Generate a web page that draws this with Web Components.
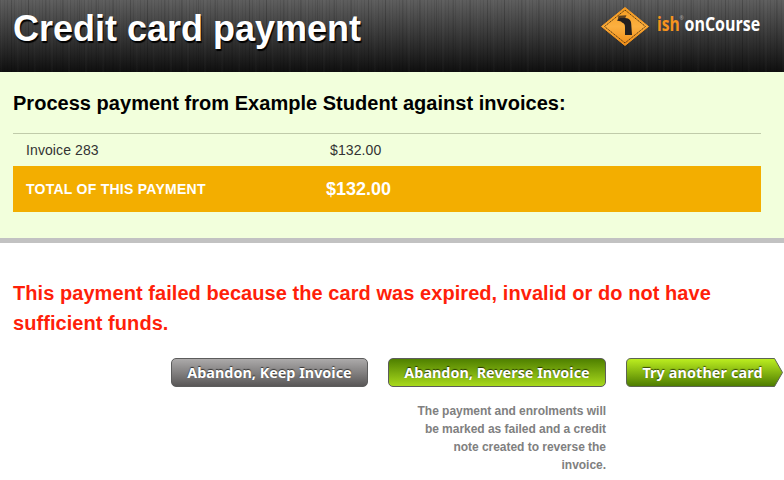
<!DOCTYPE html>
<html lang="en">
<head>
<meta charset="utf-8">
<title>Credit card payment</title>
<style>
body { margin: 0; background: #fff; font-family: "Liberation Sans", Arial, sans-serif; overflow: hidden; }
</style>
</head>
<body>
<payment-page></payment-page>
<script>
function define(name, html) {
  const template = document.createElement('template');
  template.innerHTML = html;
  customElements.define(name, class extends HTMLElement {
    constructor() {
      super();
      this.attachShadow({ mode: 'open' }).append(template.content.cloneNode(true));
    }
  });
}

define('course-logo', `
<style>:host{display:block;width:164px;height:42px} svg{display:block;overflow:visible}</style>
<svg width="164" height="42" viewBox="600 5 164 42">
  <defs><linearGradient id="g" x1="0" y1="0" x2="0" y2="1"><stop offset="0" stop-color="#f79c20"/><stop offset=".5" stop-color="#fcb040"/><stop offset="1" stop-color="#f28c16"/></linearGradient></defs>
  <path d="M625 9 L648 27.5 L625 46 L602 27.5Z" fill="#111" opacity=".5"/>
  <path d="M625 7.5 L648.5 26.5 L625 45.5 L601.5 26.5Z" fill="url(#g)" stroke="#f79a22" stroke-width="1" stroke-linejoin="round"/>
  <path d="M625 10 L645.5 26.5 L625 43 L604.5 26.5Z" fill="none" stroke="#5a3a10" stroke-width="1" stroke-dasharray="1.5 .6"/>
  <path d="M618.5 15.8 L626.5 15.2 L625 18.5 L617.5 20.5Z" fill="#5d4120"/>
  <path d="M617 20.5 L620 18 H625 C629.8 18.3 631.3 20.5 631.3 25 L632 35 H625 V27.5 C625 24.5 624.3 23.3 622 22.5 L621 21.5Z" fill="#231f20"/>
  <text transform="translate(657 31.3) scale(.8 1)" font-family="Open Sans" font-size="19.5" font-weight="700" fill="#f7941d">ish</text>
  <text x="679.5" y="20" font-family="Open Sans" font-size="5" fill="#aaa">®</text>
  <text transform="translate(684.5 31.3) scale(.82 1)" font-family="Open Sans" font-size="19.5" font-weight="700" fill="#fff">onCourse</text>
</svg>`);

define('page-banner', `
<style>
:host{display:flex;justify-content:space-between;align-items:flex-start;height:72px;box-sizing:border-box;padding:5px 20px 0 13px;
background:
 repeating-linear-gradient(90deg,rgba(0,0,0,.09) 0 1px,transparent 1px 4px,rgba(0,0,0,.06) 4px 5px,transparent 5px 7px),
 repeating-linear-gradient(90deg,rgba(255,255,255,.02) 0 2px,transparent 2px 11px,rgba(0,0,0,.12) 11px 12px,transparent 12px 17px),
 linear-gradient(#5e5e5e,#0f0f0f)}
h1{margin:3px 0 0;font-size:36px;line-height:42px;color:#fff;text-shadow:1px 2px 1px #000;white-space:nowrap}
</style>
<h1><slot></slot></h1><course-logo></course-logo>`);

define('invoice-row', `
<style>
:host{display:grid;grid-template-columns:304px 1fr;align-items:center;height:32px;padding-left:13px;font-size:14px;letter-spacing:.1px;color:#333;box-sizing:border-box}
:host([total]){height:46px;background:#f3ae00;color:#fff;font-weight:700;grid-template-columns:300px 1fr;letter-spacing:.26px}
:host([total]) .amount{font-size:18px;letter-spacing:0}
</style>
<span><slot></slot></span><span class="amount"><slot name="amount"></slot></span>`);

define('invoice-summary', `
<style>
:host{display:block;height:171px;box-sizing:border-box;padding:17px 23px 0 13px;background:#f2ffdc;border-bottom:5px solid #c2c2c2}
h2{margin:0 0 15px;font-size:20px;line-height:29px;color:#000;letter-spacing:.025px}
.rows{border-top:1px solid #c0cbaa}
</style>
<h2><slot name="heading"></slot></h2><div class="rows"><slot></slot></div>`);

define('action-button', `
<style>
:host{display:block}
button{display:block;width:100%;height:29px;padding:1px 0 0;margin:0;border:1px solid #5c5c5c;border-radius:5px;color:#fff;font:700 14.4px/26px "Noto Sans","Open Sans",sans-serif;text-shadow:0 -1px 1px rgba(0,0,0,.65);background:linear-gradient(#acaaaa,#595757);white-space:nowrap}
:host([kind=reverse]) button{background:linear-gradient(#4f8000,#a8d91c)}
:host([kind=next]){position:relative}
:host([kind=next]) button{border-color:transparent;background:none;position:relative;padding:1px 5px 0 0;letter-spacing:.1px}
svg{display:none}
:host([kind=next]) svg{display:block;position:absolute;inset:0}
</style>
<svg width="158" height="29" viewBox="0 0 158 29"><defs><linearGradient id="g" x1="0" y1="0" x2="0" y2="1"><stop stop-color="#bdef20"/><stop offset="1" stop-color="#4c7b00"/></linearGradient></defs><path d="M5 .5H148.5L156.5 14.5L148.5 28.5H5Q.5 28.5 .5 24V5Q.5 .5 5 .5Z" fill="url(#g)" stroke="#5c6552"/></svg>
<button><slot></slot></button>`);

define('payment-result', `
<style>
:host{display:block;padding:35px 0 0 13px}
h2{margin:0;font-size:20px;line-height:30px;color:#ff1f0a;width:715px;letter-spacing:.06px}
.actions{display:grid;grid-template-columns:197px 218px 158px;gap:20px;margin:20px 0 0 158px;align-items:start}
p{margin:15px 0 0 auto;width:192px;text-align:right;font-size:12px;line-height:18px;font-weight:700;color:#808080;letter-spacing:-.03px}
</style>
<h2>This payment failed because the card was expired, invalid or do not have sufficient funds.</h2>
<div class="actions">
<action-button>Abandon, Keep Invoice</action-button>
<div><action-button kind="reverse">Abandon, Reverse Invoice</action-button>
<p>The payment and enrolments will be marked as failed and a credit note created to reverse the invoice.</p></div>
<action-button kind="next">Try another card</action-button>
</div>`);

define('payment-page', `
<style>:host{display:block;width:784px;height:480px;overflow:hidden}</style>
<page-banner>Credit card payment</page-banner>
<invoice-summary><span slot="heading">Process payment from Example Student against invoices:</span>
<invoice-row>Invoice 283<span slot="amount">$132.00</span></invoice-row>
<invoice-row total>TOTAL OF THIS PAYMENT<span slot="amount">$132.00</span></invoice-row>
</invoice-summary>
<payment-result></payment-result>`);
</script>
</body>
</html>
